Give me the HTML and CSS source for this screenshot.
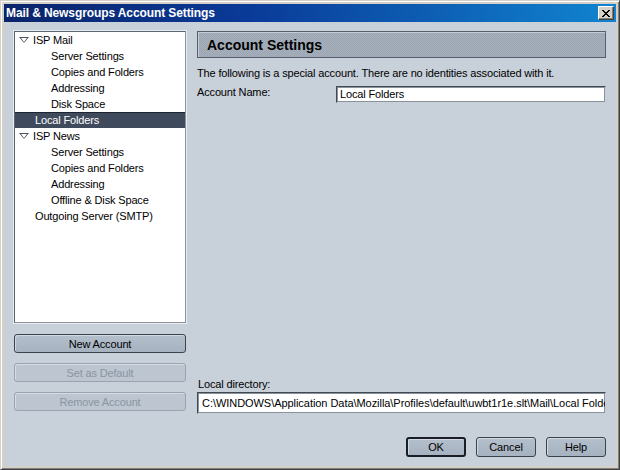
FILE: index.html
```html
<!DOCTYPE html>
<html>
<head>
<meta charset="utf-8">
<link rel="stylesheet" href="styles.css">
</head>
<body>
<div class="window">
  <div class="titlebar">
    <span class="title">Mail &amp; Newsgroups Account Settings</span>
    <span class="close"><svg width="8" height="7" viewBox="0 0 8 7"><path d="M0 0h2v1h1v1h2V1h1V0h2v1H7v1H6v1H5v1h1v1h1v1h1v1H6V6H5V5H3v1H2v1H0V6h1V5h1V4h1V3H2V2H1V1H0z" fill="#000"/></svg></span>
  </div>
  <div class="content">
    <div class="main">
      <div class="left">
        <ul class="tree">
          <li class="row top"><span class="twisty"></span>ISP Mail</li>
          <li class="row child">Server Settings</li>
          <li class="row child">Copies and Folders</li>
          <li class="row child">Addressing</li>
          <li class="row child">Disk Space</li>
          <li class="row leaf selected">Local Folders</li>
          <li class="row top"><span class="twisty"></span>ISP News</li>
          <li class="row child">Server Settings</li>
          <li class="row child">Copies and Folders</li>
          <li class="row child">Addressing</li>
          <li class="row child">Offline &amp; Disk Space</li>
          <li class="row leaf">Outgoing Server (SMTP)</li>
        </ul>
        <div class="side-buttons">
          <button class="btn">New Account</button>
          <button class="btn" disabled>Set as Default</button>
          <button class="btn" disabled>Remove Account</button>
        </div>
      </div>
      <div class="right">
        <div class="header">Account Settings</div>
        <p class="note">The following is a special account. There are no identities associated with it.</p>
        <div class="field">
          <label class="label">Account Name:</label>
          <div class="input name-input">Local Folders</div>
        </div>
        <div class="spacer"></div>
        <div class="dir">
          <label class="label">Local directory:</label>
          <div class="input dir-input">C:\WINDOWS\Application Data\Mozilla\Profiles\default\uwbt1r1e.slt\Mail\Local Folders</div>
        </div>
      </div>
    </div>
    <div class="footer">
      <button class="btn dlg default">OK</button>
      <button class="btn dlg">Cancel</button>
      <button class="btn dlg">Help</button>
    </div>
  </div>
</div>
</body>
</html>
```
FILE: styles.css
```css
html, body {
  margin: 0;
  padding: 0;
  background: #d4d0c8;
}
body {
  font-family: "Liberation Sans", Arial, sans-serif;
  font-size: 11px;
  letter-spacing: -0.15px;
  color: #000;
}
.window {
  width: 620px;
  height: 470px;
  box-sizing: border-box;
  border: 1px solid;
  border-color: #d4d0c8 #404040 #404040 #d4d0c8;
  box-shadow: inset 1px 1px 0 #fff, inset -1px -1px 0 #808080;
  padding: 3px;
  display: flex;
  flex-direction: column;
  background: #d4d0c8;
}
.titlebar {
  height: 18px;
  background: linear-gradient(to right, #0a246a 0%, #0a3a98 40%, #1084d0 100%);
  display: flex;
  align-items: center;
  justify-content: space-between;
  padding: 0 2px;
  flex: none;
}
.title {
  color: #fff;
  font-weight: bold;
  font-size: 12px;
  letter-spacing: -0.1px;
}
.close {
  width: 16px;
  height: 14px;
  box-sizing: border-box;
  background: #d4d0c8;
  border: 1px solid;
  border-color: #fff #404040 #404040 #fff;
  box-shadow: inset -1px -1px 0 #808080;
  display: flex;
  align-items: center;
  justify-content: center;
}
.content {
  flex: 1;
  background: #c8d0da;
  display: flex;
  flex-direction: column;
  padding: 9px 10px;
  min-height: 0;
}
.main {
  flex: 1;
  display: flex;
  gap: 11px;
  min-height: 0;
}
.left {
  flex: none;
  width: 172px;
  display: flex;
  flex-direction: column;
}
.tree {
  list-style: none;
  margin: 0;
  padding: 0;
  height: 292px;
  box-sizing: border-box;
  background: #fff;
  border: 1px solid;
  border-color: #5c6470 #8a929e #8a929e #5c6470;
  box-shadow: 0 0 0 1px #e8ecf0;
}
.row {
  height: 16px;
  line-height: 16px;
  white-space: nowrap;
  display: flex;
  align-items: center;
}
.row.top { padding-left: 4px; }
.row.child { padding-left: 36px; }
.row.leaf { padding-left: 20px; }
.row.selected {
  background: #3f4a5c;
  color: #fff;
  box-shadow: inset 0 1px 0 #1e2530;
}
.twisty {
  width: 0;
  height: 0;
  border-left: 5px solid transparent;
  border-right: 5px solid transparent;
  border-top: 6px solid #4c5462;
  margin-right: 4px;
  position: relative;
}
.twisty::after {
  content: "";
  position: absolute;
  left: -3px;
  top: -5px;
  border-left: 3px solid transparent;
  border-right: 3px solid transparent;
  border-top: 4px solid #fff;
}
.side-buttons {
  display: flex;
  flex-direction: column;
  gap: 10px;
  margin-top: 11px;
}
.btn {
  font-family: "Liberation Sans", Arial, sans-serif;
  font-size: 11px;
  letter-spacing: -0.15px;
  height: 19px;
  padding: 0;
  background: linear-gradient(#b4bfcc, #a6b2c0);
  border: 1px solid #3a424c;
  border-radius: 3px;
  color: #000;
  box-shadow: inset 1px 1px 0 #d0d8e2;
}
.btn:disabled {
  background: #bcc5d0;
  border-color: #9aa4b0;
  color: #8a95a3;
  box-shadow: inset 1px 1px 0 #d4dce6;
}
.right {
  flex: 1;
  display: flex;
  flex-direction: column;
  min-width: 0;
}
.header {
  height: 27px;
  box-sizing: border-box;
  border: 1px solid #56606c;
  background: repeating-conic-gradient(#a6b0bc 0 25%, #9ca6b2 0 50%) 0 0 / 2px 2px;
  font-weight: bold;
  font-size: 14px;
  letter-spacing: 0;
  padding-left: 9px;
  line-height: 26px;
  box-shadow: inset 1px 1px 0 #c4ccd6;
}
.note {
  margin: 8px 0 0 0;
  line-height: 14px;
}
.field {
  display: flex;
  align-items: flex-start;
  margin-top: 5px;
}
.field .label {
  width: 139px;
  line-height: 14px;
  flex: none;
}
.input {
  background: #fff;
  border: 1px solid;
  border-color: #404850 #c8d0da #c8d0da #404850;
  box-shadow: 0 0 0 1px #8a929e inset;
  box-sizing: border-box;
  white-space: nowrap;
  overflow: hidden;
  padding-left: 3px;
}
.name-input {
  flex: 1;
  height: 17px;
  line-height: 15px;
  margin-top: 1px;
}
.spacer { flex: 1; }
.dir {
  display: flex;
  flex-direction: column;
  margin-bottom: 9px;
}
.dir .label {
  line-height: 13px;
  margin-bottom: 1px;
  padding-left: 1px;
}
.dir-input {
  height: 22px;
  line-height: 20px;
  padding-left: 4px;
  font-size: 11px;
  letter-spacing: -0.05px;
}
.footer {
  display: flex;
  justify-content: flex-end;
  gap: 10px;
  margin-top: 14px;
  flex: none;
}
.btn.dlg {
  width: 60px;
  height: 20px;
}
.btn.default {
  border-width: 2px;
  border-color: #1a1e24;
}
```
